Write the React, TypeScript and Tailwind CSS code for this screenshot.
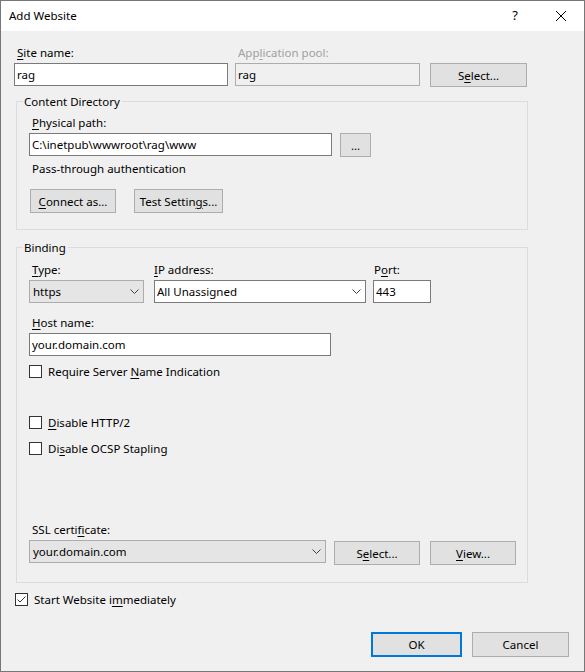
import type { ReactNode } from "react";

// Underlines the access-key letter of a label, the way WinForms draws "&S".
function Accel({ text, at }: { text: string; at: number }) {
  return (
    <>
      {text.slice(0, at)}
      <span className="underline underline-offset-2 decoration-1">{text[at]}</span>
      {text.slice(at + 1)}
    </>
  );
}

function Label({
  children,
  className = "pl-[3px]",
}: {
  children: ReactNode;
  className?: string;
}) {
  return (
    <div className={`h-[16px] leading-[18px] mb-[3px] whitespace-nowrap ${className}`}>
      {children}
    </div>
  );
}

function TextBox({
  value,
  className = "",
  readOnly = false,
}: {
  value: string;
  className?: string;
  readOnly?: boolean;
}) {
  return (
    <div
      className={`h-[23px] border flex items-center pl-[2px] pt-[1px] leading-[16px] whitespace-nowrap ${
        readOnly ? "border-[#adadad] bg-[#f0f0f0]" : "border-[#7a7a7a] bg-white"
      } ${className}`}
    >
      {value}
    </div>
  );
}

function Chevron() {
  return (
    <svg width="9" height="5" viewBox="0 0 9 5" className="shrink-0">
      <polyline
        points="0.5,0.5 4.5,4.5 8.5,0.5"
        fill="none"
        stroke="#404040"
        strokeWidth="1"
      />
    </svg>
  );
}

function ComboBox({
  value,
  className = "",
  flat = false,
}: {
  value: string;
  className?: string;
  flat?: boolean;
}) {
  return (
    <div
      className={`h-[23px] border flex items-center justify-between pr-[4px] leading-[16px] whitespace-nowrap ${
        flat
          ? "border-[#acacac] bg-[#e5e5e5] pl-[3px]"
          : "border-[#7a7a7a] bg-white pl-[2px]"
      } ${className}`}
    >
      <span className="pt-[1px]">{value}</span>
      <Chevron />
    </div>
  );
}

function Button({
  children,
  className = "",
}: {
  children: ReactNode;
  className?: string;
}) {
  return (
    <button
      className={`h-[24px] border border-[#adadad] bg-[#e1e1e1] pt-[1px] leading-[16px] flex items-center justify-center whitespace-nowrap ${className}`}
    >
      {children}
    </button>
  );
}

function CheckBox({
  children,
  checked = false,
  className = "",
}: {
  children: ReactNode;
  checked?: boolean;
  className?: string;
}) {
  return (
    <div className={`h-[16px] flex items-center ${className}`}>
      <div className="w-[13px] h-[13px] border border-[#333333] bg-white shrink-0 relative">
        {checked && (
          <svg width="11" height="11" viewBox="0 0 11 11" className="absolute left-0 top-0">
            <polyline
              points="1.5,5.5 4,8 9.5,2.5"
              fill="none"
              stroke="#333333"
              strokeWidth="1"
            />
          </svg>
        )}
      </div>
      <span className="ml-[6px] pt-[1px] leading-[16px] whitespace-nowrap">{children}</span>
    </div>
  );
}

function GroupBox({
  title,
  children,
  className = "",
}: {
  title: string;
  children: ReactNode;
  className?: string;
}) {
  return (
    <div className={`relative border border-[#dcdcdc] ${className}`}>
      <span className="absolute left-[6px] top-[-9px] px-[1px] pr-[2px] bg-[#f0f0f0] leading-[18px] whitespace-nowrap">
        {title}
      </span>
      {children}
    </div>
  );
}

export default function AddWebsiteDialog() {
  return (
    <div className="w-[585px] h-[672px] border border-[#777777] bg-[#f0f0f0] flex flex-col text-[11.5px] text-black font-['Noto_Sans',sans-serif] select-none">
      {/* Title bar */}
      <div className="h-[30px] bg-white flex items-center shrink-0">
        <span className="pl-[8px] leading-[16px] flex-1">Add Website</span>
        <div className="w-[46px] h-full flex items-center justify-center text-[13px]">?</div>
        <div className="w-[46px] h-full flex items-center justify-center">
          <svg width="10" height="10" viewBox="0 0 10 10">
            <path d="M0 0 L10 10 M10 0 L0 10" stroke="#000" strokeWidth="1" />
          </svg>
        </div>
      </div>

      <div className="flex-1 pl-[13px] pt-[13px] flex flex-col">
        {/* Site name / application pool */}
        <div className="flex items-start">
          <div className="w-[214px]">
            <Label>
              <Accel text="Site name:" at={0} />
            </Label>
            <TextBox value="rag" />
          </div>
          <div className="w-[185px] ml-[7px]">
            <Label className="pl-[3px] text-[#a0a0a0]">
              <Accel text="Application pool:" at={3} />
            </Label>
            <TextBox value="rag" readOnly />
          </div>
          <Button className="w-[97px] ml-[10px] mt-[19px]">
            <Accel text="Select..." at={1} />
          </Button>
        </div>

        <GroupBox title="Content Directory" className="mt-[14px] ml-[2px] w-[512px] pt-[12px] pl-[12px] pb-[16px]">
          <Label>
            <Accel text="Physical path:" at={0} />
          </Label>
          <div className="flex items-start">
            <TextBox value="C:\inetpub\wwwroot\rag\www" className="w-[303px]" />
            <Button className="w-[31px] ml-[8px]">...</Button>
          </div>
          <div className="mt-[3px] pl-[3px] h-[16px] leading-[18px]">Pass-through authentication</div>
          <div className="flex mt-[13px]">
            <Button className="w-[86px] ml-[1px]">
              <Accel text="Connect as..." at={0} />
            </Button>
            <Button className="w-[89px] ml-[18px]">
              <Accel text="Test Settings..." at={11} />
            </Button>
          </div>
        </GroupBox>

        <GroupBox title="Binding" className="mt-[17px] ml-[2px] w-[512px] pt-[13px] pl-[12px] pb-[17px]">
          <div className="flex items-start">
            <div className="w-[115px]">
              <Label>
                <Accel text="Type:" at={0} />
              </Label>
              <ComboBox value="https" flat />
            </div>
            <div className="w-[212px] ml-[10px]">
              <Label className="pl-0">
                <Accel text="IP address:" at={0} />
              </Label>
              <ComboBox value="All Unassigned" />
            </div>
            <div className="w-[58px] ml-[7px]">
              <Label className="pl-[1px]">
                <Accel text="Port:" at={1} />
              </Label>
              <TextBox value="443" />
            </div>
          </div>

          <Label className="pl-[3px] mt-[11px]">
            <Accel text="Host name:" at={0} />
          </Label>
          <TextBox value="your.domain.com" className="w-[302px]" />

          <CheckBox className="mt-[7px]">
            <Accel text="Require Server Name Indication" at={15} />
          </CheckBox>
          <CheckBox className="mt-[35px]">
            <Accel text="Disable HTTP/2" at={0} />
          </CheckBox>
          <CheckBox className="mt-[10px]">
            <Accel text="Disable OCSP Stapling" at={2} />
          </CheckBox>

          <Label className="pl-[3px] mt-[65px]">
            <Accel text="SSL certificate:" at={9} />
          </Label>
          <div className="flex items-start">
            <ComboBox value="your.domain.com" flat className="w-[297px]" />
            <Button className="w-[86px] ml-[8px] mt-[1px]">
              <Accel text="Select..." at={1} />
            </Button>
            <Button className="w-[86px] ml-[10px] mt-[1px]">
              <Accel text="View..." at={0} />
            </Button>
          </div>
        </GroupBox>

        <CheckBox checked className="mt-[8px] ml-[1px]">
          <Accel text="Start Website immediately" at={15} />
        </CheckBox>

        {/* Dialog buttons */}
        <div className="flex justify-end pr-[15px] mt-[25px]">
          <button className="w-[91px] h-[25px] border-2 border-[#0078d7] bg-[#e1e1e1] pt-[1px] leading-[16px]">
            OK
          </button>
          <button className="w-[97px] h-[25px] ml-[10px] border border-[#adadad] bg-[#e1e1e1] pt-[1px] leading-[16px]">
            Cancel
          </button>
        </div>
      </div>
    </div>
  );
}
